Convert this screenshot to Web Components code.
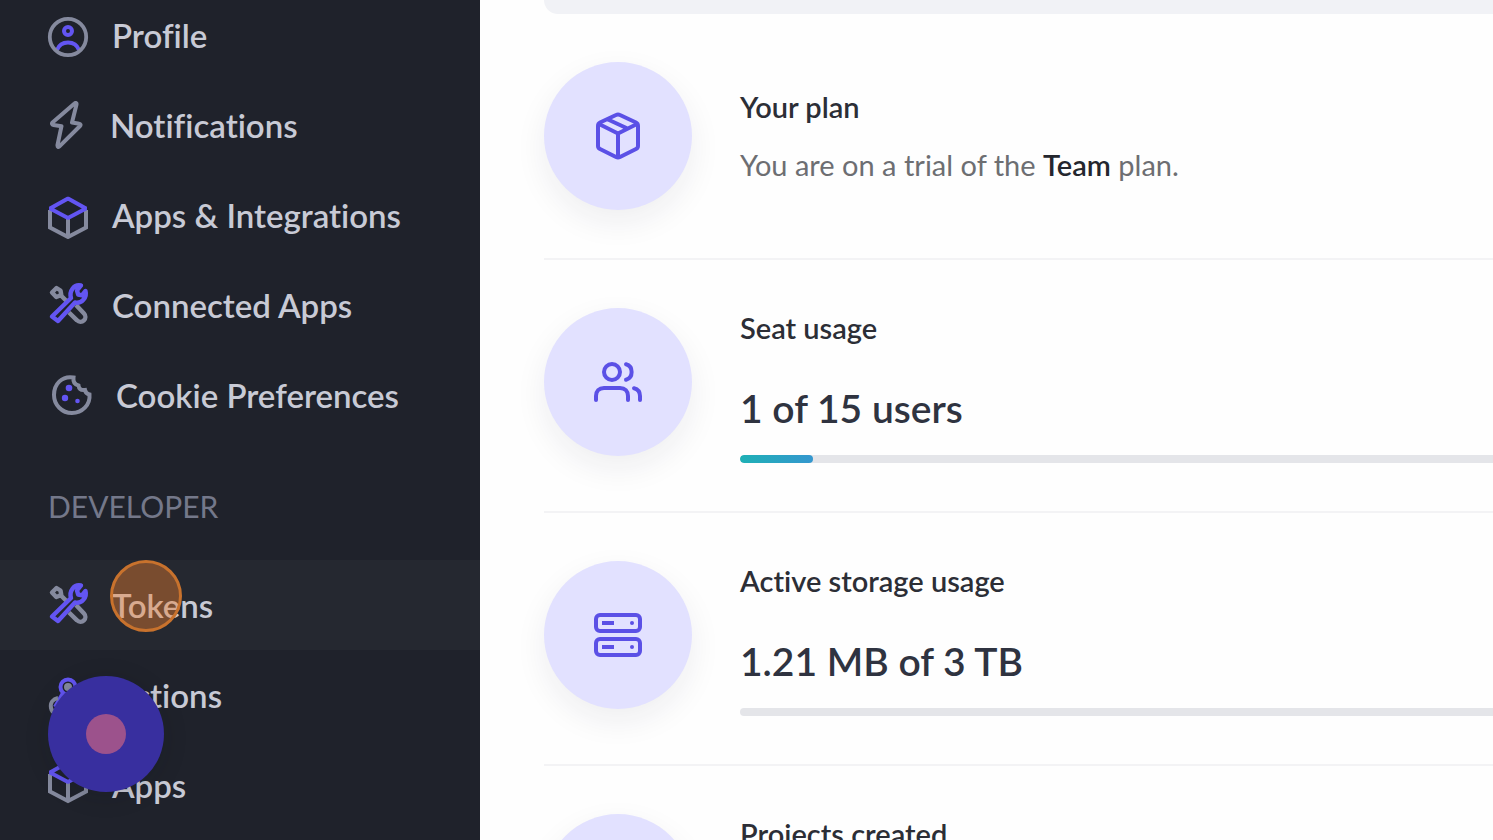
<!DOCTYPE html>
<html lang="en">
<head>
<meta charset="utf-8">
<title>Account settings</title>
<style>
  html, body { margin: 0; height: 100%; }
  body { overflow: hidden; background: #fefefe; font-family: Lato, "Liberation Sans", sans-serif; font-variant-ligatures: none; }
</style>
</head>
<body>
<settings-app></settings-app>

<script>
const box = '<g fill="none" stroke-width="4"><path stroke="#858a9e" d="M6 18v17.500l18 9.500 18-9.500V18M24 26v19"/><path stroke="#6355f2" stroke-linejoin="bevel" d="M24 6.500 6 16.500 24 26l18-9.500z"/></g>';
const ICONS = {
  profile: { view: '0 -2 48 48', art: '<g fill="none" stroke="#6355f2" stroke-width="4"><circle cx="24" cy="18" r="4"/><path d="M13 37c1.800-4.800 6-7.500 11-7.500s9.200 2.700 11 7.500"/></g><circle cx="24" cy="24" r="18.200" fill="none" stroke="#858a9e" stroke-width="3.800"/>' },
  bolt: { view: '0 0 46 48', width: 46, art: '<path d="M30.500 2.500 8.500 21.500c-1 1-.5 2.200 1 2.500l8 1.200L13.500 44c-.2 2 1 2.500 2.200 1.200L36 25c1-1 .5-2-.8-2.200L28 21.500 32.500 3.500c.3-1.600-.8-2.100-2-1z" fill="none" stroke="#858a9e" stroke-width="4" stroke-linejoin="round"/>' },
  box: { view: '0 -1 48 48', art: box },
  boxHigh: { view: '0 5 48 48', art: box },
  tools: { view: '0 2 48 48', art: '<g fill="none" stroke-linejoin="round" stroke-width="4.400"><path stroke="#858a9e" d="M8 13.500 12.500 9l4 2.500.8 4.500-5 2zM16.500 16l7 7M32 26l8 8.500a4.800 4.800 0 0 1-7 6.800L25 33.500"/><path stroke="#6355f2" d="M8 37.500 27 19C25 12 30 5 37 6.500L33 11.500l1.200 4 3.800.8 3.500-4.300C43.300 18.500 37.500 25 31 23.500L14 42z"/></g>' },
  cookie: { view: '-4 0 52 48', width: 52, art: '<path d="M25.500 6.500C14 4.500 6 13 6 24c0 10 8 18 18 18s18.500-8 17.500-18.500c-2.500-.5-4-2-4.500-4.500-3.500.5-6-1-6.500-4.500-4-1-5.500-4-5-8z" fill="none" stroke="#858a9e" stroke-width="4"/><g fill="#6355f2"><circle cx="21" cy="17" r="3.300"/><circle cx="17" cy="27" r="3.200"/><circle cx="29.500" cy="30" r="2.300"/></g>' },
  flow: { view: '0 -2 48 48', art: '<g fill="none" stroke-width="4"><circle cx="24" cy="14" r="7.500" stroke="#6355f2"/><path d="M19 20 11 34" stroke="#6355f2"/><path d="M14 25c-5 1-8 5-7 10s7 8 12 5" stroke="#858a9e"/><path d="M31 31c6-3 11 2 10 7s-7 7-11 3H20" stroke="#858a9e"/></g><circle cx="24" cy="14" r="4" fill="#858a9e"/>' },
  package: { view: '0 0 48 48', art: '<path d="M22 3Q24 2 26 3L42 10.500Q44 11.500 44 14V34Q44 36 42 37L26 45Q24 46 22 45L6 37Q4 36 4 34V14Q4 11.500 6 10.500zM5 12 24 21.500 43 12M24 21.500V45.500M14 7.500 33.500 16.500" fill="none" stroke="#5b50e6" stroke-width="4" stroke-linejoin="round"/>' },
  users: { view: '0 0 48 48', art: '<g fill="none" stroke="#5b50e6" stroke-width="4" stroke-linecap="round"><circle cx="18" cy="14" r="8"/><path d="M2 42v-4c0-5 3-8 8-8h16c5 0 8 3 8 8v4M32 6.200c7.500 2 7.500 13.600 0 15.600M46 42v-4c0-4-2-6.800-6-7.800"/></g>' },
  servers: { view: '0 0 48 48', art: '<g fill="none" stroke="#5b50e6" stroke-width="4"><rect x="2" y="4" width="44" height="16" rx="4"/><rect x="2" y="28" width="44" height="16" rx="4"/></g><g fill="#5b50e6"><path d="M8 10h12v4H8zM8 34h12v4H8z"/><circle cx="38" cy="12" r="2"/><circle cx="38" cy="36" r="2"/></g>' },
  folder: { view: '0 0 48 48', art: '<path d="M4 8h14l5 6h21v26H4z" fill="none" stroke="#5b50e6" stroke-width="4"/>' }
};

function define(name, render) {
  customElements.define(name, class extends HTMLElement {
    connectedCallback() {
      if (this.shadowRoot) return;
      this.attachShadow({ mode: 'open' }).innerHTML = render(this);
    }
  });
}

define('app-icon', el => {
  const icon = ICONS[el.getAttribute('name')];
  return `<style>:host{display:block;flex:none;width:${icon.width || 48}px;height:48px}svg{display:block;width:100%;height:100%}</style>
    <svg viewBox="${icon.view}" aria-hidden="true">${icon.art}</svg>`;
});

define('nav-item', el => `
  <style>
    :host { display: block; }
    :host([active]) { background: #252830; }
    a { display: flex; align-items: center; gap: 20px; height: 90px; padding-left: 44px;
        color: #c8cad5; text-decoration: none; font-size: 33px; font-weight: 600; line-height: 40px; white-space: nowrap; }
  </style>
  <a href="#"><app-icon name="${el.getAttribute('icon')}"></app-icon><span><slot></slot></span></a>`);

define('nav-heading', () => `
  <style>
    :host { display: block; }
    h2 { margin: 0; padding: 46px 48px 34px; font-size: 30px; font-weight: 400; line-height: 40px; color: #74788a; }
  </style>
  <h2><slot></slot></h2>`);

define('side-bar', () => `
  <style>
    :host { display: block; position: relative; flex: none; width: 480px; height: 100%; overflow: hidden; background: #1f222b; }
    nav { margin-top: -10px; }
  </style>
  <nav aria-label="Settings">
    <nav-item icon="profile">Profile</nav-item>
    <nav-item icon="bolt">Notifications</nav-item>
    <nav-item icon="box">Apps &amp; Integrations</nav-item>
    <nav-item icon="tools">Connected Apps</nav-item>
    <nav-item icon="cookie">Cookie Preferences</nav-item>
    <nav-heading>DEVELOPER</nav-heading>
    <nav-item icon="tools" active>Tokens</nav-item>
    <nav-item icon="flow">Actions</nav-item>
    <nav-item icon="boxHigh">Apps</nav-item>
  </nav>
  <click-marker></click-marker>
  <record-button></record-button>`);

define('click-marker', () => `
  <style>
    :host { position: absolute; left: 110px; top: 560px; width: 72px; height: 72px; box-sizing: border-box;
            border: 3px solid #c8722d; border-radius: 50%; background: rgba(239, 126, 48, .42); pointer-events: none; }
  </style>`);

define('record-button', () => `
  <style>
    :host { position: absolute; left: 48px; bottom: 48px; }
    button { display: grid; place-items: center; width: 116px; height: 116px; padding: 0; border: 0; border-radius: 50%;
             background: #382f9f; box-shadow: 0 4px 24px rgba(16, 18, 26, .15); }
    span { width: 40px; height: 40px; border-radius: 50%; background: #9c528c; }
  </style>
  <button type="button" aria-label="Record"><span></span></button>`);

define('usage-meter', el => {
  const share = el.getAttribute('value') / el.getAttribute('max') * 100;
  return `
  <style>
    :host { display: block; height: 8px; margin-top: 19px; border-radius: 4px; background: #e4e5e9; overflow: hidden; }
    div { width: ${share}%; height: 8px; border-radius: 4px; background: linear-gradient(90deg, #1eb0b5, #3597cf); }
  </style>
  <div role="meter" aria-label="Usage" aria-valuemin="0" aria-valuemax="${el.getAttribute('max')}" aria-valuenow="${el.getAttribute('value')}"></div>`;
});

define('usage-row', el => `
  <style>
    :host { display: flex; align-items: flex-start; gap: 48px; padding: 48px 0; border-bottom: 2px solid #f3f3f5; }
    .badge { display: grid; place-items: center; flex: none; width: 148px; height: 148px; border-radius: 50%;
             background: #e2e1ff; box-shadow: 0 12px 32px rgba(30, 30, 50, .07); }
    .body { flex: 1; min-width: 0; }
    :host([centered]) .body { align-self: center; }
    h3 { margin: 0; font-size: 29px; font-weight: 600; line-height: 40px; color: #2c2e36; }
  </style>
  <div class="badge"><app-icon name="${el.getAttribute('icon')}"></app-icon></div>
  <div class="body"><h3>${el.getAttribute('heading')}</h3><slot></slot></div>`);

define('usage-value', () => `
  <style>
    :host { display: block; margin-top: 32px; font-size: 39px; font-weight: 600; line-height: 56px; color: #2f3340; }
  </style><slot></slot>`);

define('plan-note', () => `
  <style>
    :host { display: block; margin-top: 18px; font-size: 29px; line-height: 40px; color: #6d6e72; }
    ::slotted(b) { font-weight: 600; color: #24262e; }
  </style><slot></slot>`);

define('usage-panel', () => `
  <style>
    :host { display: block; flex: 1; min-width: 0; height: 100%; overflow: hidden; background: #fefefe; }
    main { margin-right: -340px; padding-left: 64px; }
    .banner { height: 14px; border-bottom-left-radius: 16px; background: #f1f2f6; }
  </style>
  <main>
    <div class="banner"></div>
    <usage-row icon="package" heading="Your plan" centered>
      <plan-note>You are on a trial of the <b>Team</b> plan.</plan-note>
    </usage-row>
    <usage-row icon="users" heading="Seat usage">
      <usage-value>1 of 15 users</usage-value>
      <usage-meter value="1" max="15"></usage-meter>
    </usage-row>
    <usage-row icon="servers" heading="Active storage usage">
      <usage-value>1.21 MB of 3 TB</usage-value>
      <usage-meter value="0" max="3"></usage-meter>
    </usage-row>
    <usage-row icon="folder" heading="Projects created"></usage-row>
  </main>`);

define('settings-app', () => `
  <style>:host { display: flex; height: 100vh; }</style>
  <side-bar></side-bar>
  <usage-panel></usage-panel>`);
</script>
</body>
</html>
